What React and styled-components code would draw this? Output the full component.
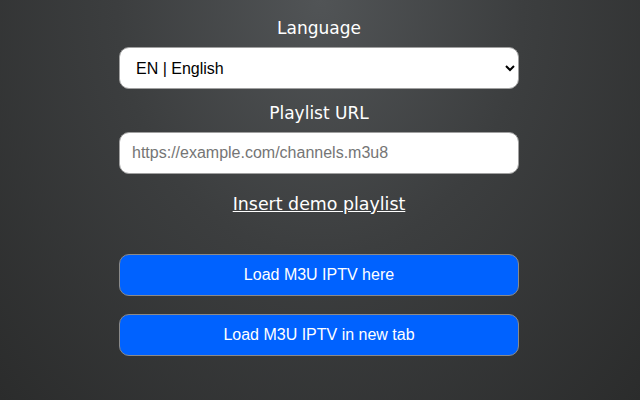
import React from 'react';
import styled, {createGlobalStyle} from 'styled-components';

const GlobalStyle = createGlobalStyle`
	html, body {
		margin: 0;
		height: 100%;
	}
	body {
		background: radial-gradient(ellipse at 50% 0%, #515456 0%, #3c3e3f 45%, #2b2c2c 100%);
		background-attachment: fixed;
		min-height: 400px;
	}
`;

const Page = styled.div`
	width: 400px;
	margin: 0 auto;
	padding: 17px 2px 0 0;
	display: flex;
	flex-direction: column;
`;

const Label = styled.label`
	font-family: "DejaVu Sans", sans-serif;
	font-size: 17px;
	line-height: 22px;
	color: #fff;
	text-align: center;
	margin-bottom: ${props => props.gap}px;
`;

const Select = styled.select`
	height: 42px;
	width: 100%;
	box-sizing: border-box;
	border: 1px solid #a0a0a0;
	border-radius: 10px;
	background: #fff;
	padding: 0 4px 0 12px;
	font-family: "Liberation Sans", Arial, sans-serif;
	font-size: 16px;
	color: #000;
	margin-bottom: 13px;
`;

const Input = styled.input`
	height: 42px;
	width: 100%;
	box-sizing: border-box;
	border: 1px solid #a0a0a0;
	border-radius: 10px;
	background: #fff;
	padding: 0 12px;
	font-family: "Liberation Sans", Arial, sans-serif;
	font-size: 16px;
	color: #000;
	outline: none;

	&::placeholder {
		color: #757575;
	}
`;

const DemoLink = styled.a`
	align-self: center;
	margin-top: 19px;
	font-family: "DejaVu Sans", sans-serif;
	font-size: 17.4px;
	line-height: 22px;
	color: #fff;
	text-decoration: underline;
	cursor: pointer;
`;

const Button = styled.button`
	height: 42px;
	width: 100%;
	border: 1px solid #8a8a8a;
	border-radius: 10px;
	background: #0062ff;
	color: #fff;
	font-family: "Liberation Sans", Arial, sans-serif;
	font-size: 16px;
	margin-top: ${props => props.top}px;
	cursor: pointer;
`;

function App(){
	return(
		<>
			<GlobalStyle />
			<Page>
				<Label gap={8}>Language</Label>
				<Select defaultValue="en">
					<option value="en">EN | English</option>
				</Select>
				<Label gap={8}>Playlist URL</Label>
				<Input type="text" placeholder="https://example.com/channels.m3u8" />
				<DemoLink>Insert demo playlist</DemoLink>
				<Button top={39}>Load M3U IPTV here</Button>
				<Button top={18}>Load M3U IPTV in new tab</Button>
			</Page>
		</>
	)
}

export default App;
